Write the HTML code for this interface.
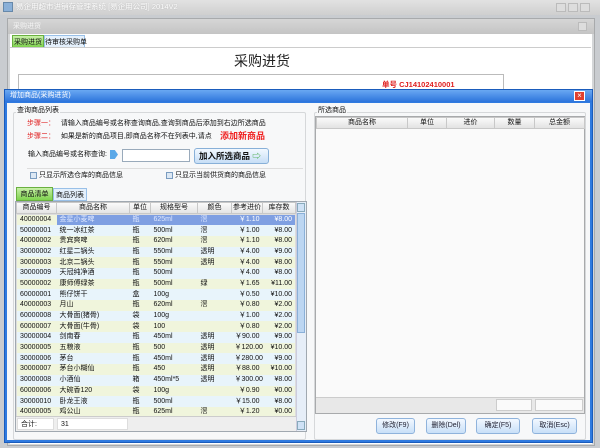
<!DOCTYPE html>
<html><head><meta charset="utf-8"><style>
*{margin:0;padding:0;box-sizing:border-box}
body{width:600px;height:448px;overflow:hidden;background:#c9ccd0;font-family:"Liberation Sans","Noto Sans CJK SC",sans-serif;font-size:7px;color:#111;position:relative}
.a{position:absolute}
.t{white-space:nowrap;line-height:1}
table{border-collapse:collapse;table-layout:fixed}
td{height:10.7px;padding:0 3px;white-space:nowrap;overflow:hidden;font-size:7px;line-height:10px}
.btn{position:absolute;border:1px solid #8fb3dc;border-radius:3px;background:linear-gradient(#f2f8ff,#c8e0f8);font-size:7px;text-align:center;line-height:14px;color:#223}
</style></head><body>
<div class="a" style="left:0;top:0;width:600px;height:15px;background:linear-gradient(#e2e2e2,#cfcfcf)"></div>
<div class="a" style="left:3px;top:2px;width:10px;height:10px;background:#8ab0d8;border:1px solid #6688aa"></div>
<div class="a t" style="left:16px;top:3px;color:#fff;font-size:7.5px;text-shadow:0 0 1px #aaa">易企用超市进销存管理系统 [易企用公司] 2014V2</div>
<div class="a" style="left:556px;top:3px;width:10px;height:9px;background:#ddd;border:1px solid #bbb"></div>
<div class="a" style="left:568px;top:3px;width:10px;height:9px;background:#ddd;border:1px solid #bbb"></div>
<div class="a" style="left:580px;top:3px;width:10px;height:9px;background:#ddd;border:1px solid #bbb"></div>
<div class="a" style="left:7px;top:18px;width:588px;height:428px;background:#d4d6d8;border:1px solid #a8aaac"></div>
<div class="a" style="left:8px;top:19px;width:586px;height:15px;background:linear-gradient(#d6d6d6,#c4c4c4)"></div>
<div class="a t" style="left:13px;top:23px;color:#f4f4f4;font-size:7px">采购进货</div>
<div class="a" style="left:578px;top:22px;width:9px;height:9px;border:1px solid #bbb;background:#ddd"></div>
<div class="a" style="left:10px;top:34px;width:582px;height:410px;background:#fff"></div>
<div class="a t" style="left:12px;top:35px;width:32px;height:13px;background:linear-gradient(#c8f0a8,#7ed24e);border:1px solid #6ab040;font-size:7px;padding-top:3px;text-align:center">采购进货</div>
<div class="a t" style="left:44px;top:35px;width:41px;height:13px;background:#e4f0fc;border:1px solid #99c0e8;font-size:7px;padding-top:3px;text-align:center">待审核采购单</div>
<div class="a" style="left:10px;top:47px;width:581px;height:1px;background:#ccc"></div>
<div class="a t" style="left:234px;top:54px;font-size:14px;color:#222">采购进货</div>
<div class="a" style="left:18px;top:74px;width:486px;height:20px;border:1px solid #bbb;border-bottom:none"></div>
<div class="a t" style="left:382px;top:81px;color:#e02020;font-weight:bold;font-size:7.5px">单号 CJ14102410001</div>
<div class="a" style="left:4px;top:89px;width:589px;height:354px;background:#2f7ae0;border:1px solid #1a5cbc"></div>
<div class="a" style="left:5px;top:90px;width:587px;height:12px;background:linear-gradient(#6aa8f2,#2c74dc)"></div>
<div class="a t" style="left:10px;top:92px;color:#fff;font-size:7px">增加商品(采购进货)</div>
<div class="a" style="left:574px;top:91px;width:11px;height:10px;background:#e04030;border:1px solid #fff;color:#fff;font-size:8px;line-height:8px;text-align:center">×</div>
<div class="a" style="left:7px;top:103px;width:583px;height:337px;background:#f7f8f9"></div>
<div class="a" style="left:13px;top:112px;width:293px;height:328px;border:1px solid #d6d8da;border-radius:2px"></div>
<div class="a t" style="left:16px;top:107px;background:#f7f8f9;padding:0 1px">查询商品列表</div>
<div class="a t" style="left:27px;top:120px"><span style="color:#e02020">步骤一：</span>&nbsp;&nbsp; 请输入商品编号或名称查询商品,查询到商品后添加到右边所选商品</div>
<div class="a t" style="left:27px;top:133px"><span style="color:#e02020">步骤二：</span>&nbsp;&nbsp; 如果是新的商品项目,即商品名称不在列表中,请点</div>
<div class="a t" style="left:220px;top:132px;font-size:9px;color:#f02020;font-weight:bold">添加新商品</div>
<div class="a t" style="left:28px;top:151px">输入商品编号或名称查询:</div>
<div class="a" style="left:110px;top:150px;width:8px;height:9px;background:#5aa8e8;clip-path:polygon(0 0,60% 0,100% 50%,60% 100%,0 100%)"></div>
<div class="a" style="left:122px;top:149px;width:68px;height:13px;background:#fff;border:1px solid #99aabb"></div>
<div class="a t" style="left:194px;top:148px;width:75px;height:16px;border:1px solid #88b0d8;border-radius:3px;background:linear-gradient(#f2f8ff,#c6def6);font-weight:bold;font-size:8.5px;padding:3px 0 0 4px">加入所选商品 <span style="color:#4a4">⇨</span></div>
<div class="a" style="left:27px;top:168px;width:276px;height:1px;background:#ddd"></div>
<div class="a" style="left:30px;top:172px;width:7px;height:7px;border:1px solid #7a9cc0;background:#dce8f4"></div>
<div class="a t" style="left:39px;top:172px">只显示所选仓库的商品信息</div>
<div class="a" style="left:166px;top:172px;width:7px;height:7px;border:1px solid #7a9cc0;background:#dce8f4"></div>
<div class="a t" style="left:175px;top:172px">只显示当前供货商的商品信息</div>
<div class="a t" style="left:16px;top:187px;width:37px;height:14px;background:linear-gradient(#c8f0a8,#7ed24e);border:1px solid #6ab040;padding-top:3px;text-align:center">商品清单</div>
<div class="a t" style="left:53px;top:188px;width:34px;height:13px;background:#e4f0fc;border:1px solid #99c0e8;padding-top:3px;text-align:center">商品列表</div>
<div class="a" style="left:15px;top:201px;width:292px;height:231px;border:1px solid #a0a8b0;background:#fff"></div>
<div class="a" style="left:16px;top:202px">
<table style="width:279px">
<colgroup><col style="width:40px"><col style="width:73px"><col style="width:21px"><col style="width:47px"><col style="width:34px"><col style="width:31px"><col style="width:33px"></colgroup>
<tr style="background:linear-gradient(#fafafa,#e2e2e2)"><td style="text-align:center;border:1px solid #c8c8c8;padding:0">商品编号</td><td style="text-align:center;border:1px solid #c8c8c8">商品名称</td><td style="text-align:center;border:1px solid #c8c8c8;padding:0">单位</td><td style="text-align:center;border:1px solid #c8c8c8">规格型号</td><td style="text-align:center;border:1px solid #c8c8c8">颜色</td><td style="text-align:center;border:1px solid #c8c8c8;padding:0">参考进价</td><td style="text-align:center;border:1px solid #c8c8c8">库存数</td></tr>
</table>
<table style="width:279px;border:1px solid #ddd">
<colgroup><col style="width:40px"><col style="width:73px"><col style="width:21px"><col style="width:47px"><col style="width:34px"><col style="width:31px"><col style="width:33px"></colgroup>
<tr style="background:#f0f5dc"><td>40000004</td><td style="background:#7f9fe2;color:#dfe8ff">金星小麦啤</td><td style="background:#7f9fe2;color:#dfe8ff">瓶</td><td style="background:#7f9fe2;color:#dfe8ff">625ml</td><td style="background:#7f9fe2;color:#dfe8ff">滘</td><td style="background:#7f9fe2;color:#fff;text-align:right">￥1.10</td><td style="background:#7f9fe2;color:#fff;text-align:right">¥8.00</td></tr>
<tr style="background:#e8f4fb"><td>50000001</td><td>统一冰红茶</td><td>瓶</td><td>500ml</td><td>滘</td><td style="text-align:right">￥1.00</td><td style="text-align:right">¥8.00</td></tr>
<tr style="background:#f0f5dc"><td>40000002</td><td>贵宾爽啤</td><td>瓶</td><td>620ml</td><td>滘</td><td style="text-align:right">￥1.10</td><td style="text-align:right">¥8.00</td></tr>
<tr style="background:#e8f4fb"><td>30000002</td><td>红星二锅头</td><td>瓶</td><td>550ml</td><td>透明</td><td style="text-align:right">￥4.00</td><td style="text-align:right">¥9.00</td></tr>
<tr style="background:#f0f5dc"><td>30000003</td><td>北京二锅头</td><td>瓶</td><td>550ml</td><td>透明</td><td style="text-align:right">￥4.00</td><td style="text-align:right">¥8.00</td></tr>
<tr style="background:#e8f4fb"><td>30000009</td><td>天冠纯净酒</td><td>瓶</td><td>500ml</td><td></td><td style="text-align:right">￥4.00</td><td style="text-align:right">¥8.00</td></tr>
<tr style="background:#f0f5dc"><td>50000002</td><td>康师傅绿茶</td><td>瓶</td><td>500ml</td><td>绿</td><td style="text-align:right">￥1.65</td><td style="text-align:right">¥11.00</td></tr>
<tr style="background:#e8f4fb"><td>60000001</td><td>熊仔饼干</td><td>盒</td><td>100g</td><td></td><td style="text-align:right">￥0.50</td><td style="text-align:right">¥10.00</td></tr>
<tr style="background:#f0f5dc"><td>40000003</td><td>月山</td><td>瓶</td><td>620ml</td><td>滘</td><td style="text-align:right">￥0.80</td><td style="text-align:right">¥2.00</td></tr>
<tr style="background:#e8f4fb"><td>60000008</td><td>大骨面(猪骨)</td><td>袋</td><td>100g</td><td></td><td style="text-align:right">￥1.00</td><td style="text-align:right">¥2.00</td></tr>
<tr style="background:#f0f5dc"><td>60000007</td><td>大骨面(牛骨)</td><td>袋</td><td>100</td><td></td><td style="text-align:right">￥0.80</td><td style="text-align:right">¥2.00</td></tr>
<tr style="background:#e8f4fb"><td>30000004</td><td>剑南春</td><td>瓶</td><td>450ml</td><td>透明</td><td style="text-align:right">￥90.00</td><td style="text-align:right">¥9.00</td></tr>
<tr style="background:#f0f5dc"><td>30000005</td><td>五粮液</td><td>瓶</td><td>500</td><td>透明</td><td style="text-align:right">￥120.00</td><td style="text-align:right">¥10.00</td></tr>
<tr style="background:#e8f4fb"><td>30000006</td><td>茅台</td><td>瓶</td><td>450ml</td><td>透明</td><td style="text-align:right">￥280.00</td><td style="text-align:right">¥9.00</td></tr>
<tr style="background:#f0f5dc"><td>30000007</td><td>茅台小糊仙</td><td>瓶</td><td>450</td><td>透明</td><td style="text-align:right">￥88.00</td><td style="text-align:right">¥10.00</td></tr>
<tr style="background:#e8f4fb"><td>30000008</td><td>小酒仙</td><td>箱</td><td>450ml*5</td><td>透明</td><td style="text-align:right">￥300.00</td><td style="text-align:right">¥8.00</td></tr>
<tr style="background:#f0f5dc"><td>60000006</td><td>大碗香120</td><td>袋</td><td>100g</td><td></td><td style="text-align:right">￥0.90</td><td style="text-align:right">¥0.00</td></tr>
<tr style="background:#e8f4fb"><td>30000010</td><td>卧龙王液</td><td>瓶</td><td>500ml</td><td></td><td style="text-align:right">￥15.00</td><td style="text-align:right">¥8.00</td></tr>
<tr style="background:#f0f5dc"><td>40000005</td><td>鸡公山</td><td>瓶</td><td>625ml</td><td>滘</td><td style="text-align:right">￥1.20</td><td style="text-align:right">¥0.00</td></tr>
</table></div>
<div class="a" style="left:16px;top:416px;width:280px;height:15px;background:#eeeeee;border-top:1px solid #ccc"></div>
<div class="a t" style="left:17px;top:418px;width:37px;height:12px;background:#fff;border:1px solid #ddd;padding:2px 0 0 3px">合计:</div>
<div class="a t" style="left:57px;top:418px;width:71px;height:12px;background:#fff;border:1px solid #ddd;padding:2px 0 0 3px">31</div>
<div class="a" style="left:296px;top:202px;width:10px;height:229px;background:#e6eef8;border-left:1px solid #ccd"></div>
<div class="a" style="left:297px;top:203px;width:8px;height:9px;background:#cfe2f6;border:1px solid #8ab"></div>
<div class="a" style="left:297px;top:213px;width:8px;height:120px;background:#bcd6f2;border:1px solid #8ab0d8"></div>
<div class="a" style="left:297px;top:421px;width:8px;height:9px;background:#cfe2f6;border:1px solid #8ab"></div>
<div class="a" style="left:314px;top:112px;width:272px;height:328px;border:1px solid #d6d8da;border-radius:2px"></div>
<div class="a t" style="left:317px;top:107px;background:#f7f8f9;padding:0 1px">所选商品</div>
<div class="a" style="left:315px;top:116px;width:270px;height:298px;border:1px solid #a8aaac;background:#fafafa"></div>
<div class="a" style="left:316px;top:117px">
<table style="width:268px"><colgroup><col style="width:91px"><col style="width:39px"><col style="width:48px"><col style="width:40px"><col style="width:50px"></colgroup>
<tr style="background:linear-gradient(#fafafa,#e0e0e0)"><td style="text-align:center;border:1px solid #c8c8c8">商品名称</td><td style="text-align:center;border:1px solid #c8c8c8">单位</td><td style="text-align:center;border:1px solid #c8c8c8">进价</td><td style="text-align:center;border:1px solid #c8c8c8">数量</td><td style="text-align:center;border:1px solid #c8c8c8">总金额</td></tr></table></div>
<div class="a" style="left:316px;top:397px;width:268px;height:16px;background:#e8e8e8;border-top:1px solid #ccc"></div>
<div class="a" style="left:496px;top:399px;width:36px;height:12px;background:#fafafa;border:1px solid #ccc"></div>
<div class="a" style="left:535px;top:399px;width:48px;height:12px;background:#fafafa;border:1px solid #ccc"></div>
<div class="btn" style="left:376px;top:418px;width:39px;height:16px">修改(F9)</div>
<div class="btn" style="left:426px;top:418px;width:40px;height:16px">删除(Del)</div>
<div class="btn" style="left:476px;top:418px;width:44px;height:16px">确定(F5)</div>
<div class="btn" style="left:532px;top:418px;width:45px;height:16px">取消(Esc)</div>
</body></html>
